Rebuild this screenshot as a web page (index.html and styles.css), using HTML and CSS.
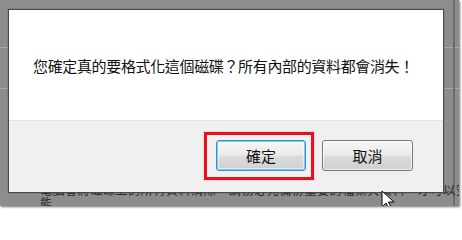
FILE: index.html
```html
<!DOCTYPE html>
<html lang="zh-Hant">
<head>
<meta charset="utf-8">
<title>格式化確認</title>
<link rel="stylesheet" href="styles.css">
</head>
<body>
<div class="shot">
  <div class="bg">
    <div class="bg-line bg-line-1"></div>
    <div class="bg-line bg-line-2"></div>
    <div class="bg-edge"></div>
    <div class="bg-text">
      <p class="bg-row">電腦會將磁碟上的所有資料清除，請務必先備份重要的檔案與資料，才可以安全地進行格式化</p>
      <p class="bg-row">能</p>
    </div>
  </div>
  <div class="dialog">
    <div class="msg">您確定真的要格式化這個磁碟？所有內部的資料都會消失！</div>
    <div class="footer">
      <button class="btn btn-primary" type="button">確定</button>
      <button class="btn" type="button">取消</button>
    </div>
  </div>
  <svg class="cursor" width="14" height="20" viewBox="0 0 14 20">
    <path d="M1 1 L1 17 L5 13 L8 19 L10.5 18 L7.5 12 L13 12 Z" fill="#fff" stroke="#000" stroke-width="1"/>
  </svg>
</div>
</body>
</html>
```
FILE: styles.css
```css
html, body {
  margin: 0;
  padding: 0;
  background: #ffffff;
}
body {
  width: 462px;
  height: 210px;
  overflow: hidden;
  font-family: "Noto Sans CJK TC", "Noto Sans", sans-serif;
}
.shot {
  position: relative;
  width: 459px;
  height: 206px;
  overflow: hidden;
  background: repeating-conic-gradient(#939393 0 25%, #868686 0 50%) 0 0 / 2px 2px;
  box-shadow: 1px 1px 2px rgba(0, 0, 0, 0.55);
}
.bg {
  position: absolute;
  inset: 0;
}
.bg-line {
  position: absolute;
  left: 0;
  right: 0;
  height: 1px;
  background: #a9a9a9;
}
.bg-line-1 { top: 47px; }
.bg-line-2 { top: 88px; }
.bg-edge {
  position: absolute;
  top: 0;
  bottom: 0;
  left: 453px;
  width: 2px;
  background: #6c6c6c;
}
.bg-text {
  position: absolute;
  left: 40px;
  top: 183px;
  color: #262626;
  font-size: 12px;
  line-height: 13px;
  letter-spacing: 0.6px;
}
.bg-row {
  margin: 0;
  white-space: nowrap;
}
.dialog {
  position: absolute;
  left: 8px;
  top: 9px;
  width: 436px;
  height: 184px;
  background: #ffffff;
  border: 1px solid #4a4a4a;
  box-sizing: border-box;
  display: flex;
  flex-direction: column;
  box-shadow: 0 0 1px rgba(0, 0, 0, 0.5);
}
.msg {
  height: 110px;
  display: flex;
  align-items: center;
  padding: 0 0 0 24px;
  font-size: 15px;
  letter-spacing: -0.35px;
  color: #111;
  box-sizing: border-box;
}
.footer {
  flex: 1;
  background: #f0f0f0;
  border-top: 1px solid #e2e2e2;
  display: flex;
  justify-content: flex-end;
  align-items: flex-start;
  gap: 16px;
  padding: 19px 30px 0 0;
}
.btn {
  position: relative;
  width: 91px;
  height: 31px;
  border: 1px solid #777;
  border-radius: 3px;
  background: linear-gradient(#f6f6f6 0%, #ebebeb 48%, #dcdcdc 52%, #d0d0d0 100%);
  font-family: "Noto Sans CJK TC", "Noto Sans", sans-serif;
  font-size: 15px;
  color: #111;
  padding: 0;
  box-shadow: inset 0 0 0 1px rgba(255, 255, 255, 0.7);
}
.btn-primary {
  width: 90px;
  border-color: #3c8fd0;
  box-shadow: inset 0 0 0 1px #6fd0f5, inset 0 0 0 2px rgba(255, 255, 255, 0.5);
}
.btn-primary::after {
  content: "";
  position: absolute;
  left: -13px;
  top: -9px;
  right: -9px;
  bottom: -10px;
  border: 3px solid #e8101c;
  box-shadow: 0 0 1px rgba(232, 16, 28, 0.6);
}
.cursor {
  position: absolute;
  left: 381px;
  top: 190px;
}
```
